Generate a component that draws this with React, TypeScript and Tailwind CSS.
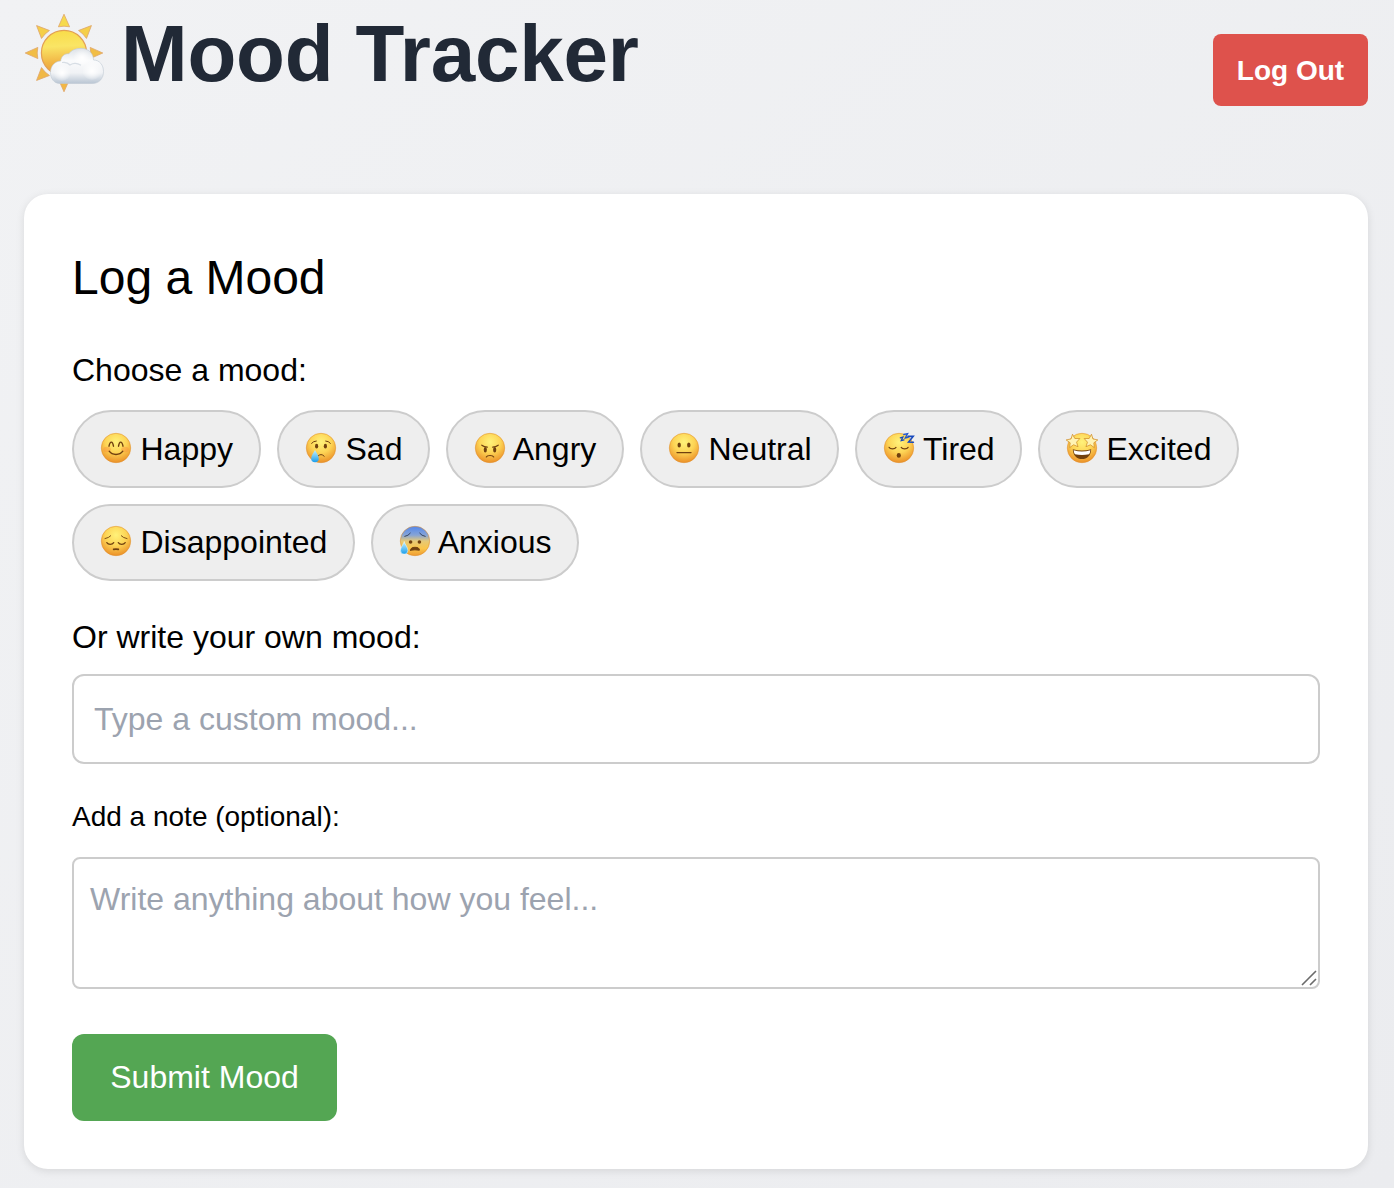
import type { ReactNode } from "react";

type Mood = "Happy" | "Sad" | "Angry" | "Neutral" | "Tired" | "Excited" | "Disappointed" | "Anxious";

const ink = "#70400f";

const star = (cx: number, cy: number, tilt: number) => (
  <path
    transform={`translate(${cx} ${cy}) rotate(${tilt})`}
    d="M0-6.8 1.9-2.3 6.9-1.8 3.2 1.5 4.2 6.2 0 3.8-4.2 6.2-3.2 1.5-6.9-1.8-1.9-2.3Z"
    fill="#fff3b4"
    stroke="#cf8a22"
    strokeWidth=".7"
    strokeLinejoin="round"
  />
);

const features: Record<Mood, ReactNode> = {
  Happy: (
    <g fill="none" stroke={ink} strokeWidth="1.4" strokeLinecap="round">
      <ellipse cx="7" cy="17.5" rx="3.8" ry="2.8" fill="#f98d3c" opacity=".4" stroke="none" />
      <ellipse cx="25" cy="17.5" rx="3.8" ry="2.8" fill="#f98d3c" opacity=".4" stroke="none" />
      <path d="M9 14.2C9.6 10.6 10.8 10.1 11.4 10.1S13 11 13.5 14.2M18.5 14.2C19 11 20 10.1 20.6 10.1S22.4 10.6 23 14.2" />
      <path d="M9.2 19.2C12.2 23.5 19.8 23.5 22.8 19.2" />
    </g>
  ),
  Sad: (
    <g fill="none" stroke={ink} strokeWidth="1" strokeLinecap="round">
      <ellipse cx="11.6" cy="14.2" rx="1.6" ry="2.4" fill={ink} stroke="none" />
      <ellipse cx="20.4" cy="14.2" rx="1.6" ry="2.4" fill={ink} stroke="none" />
      <path d="M6.6 11.3Q8.5 9 11.3 9M20.7 9Q23.5 9 25.4 11.3M12.8 24.2Q16 20.7 19.2 24.2" />
      <path d="M10 18.1C8.8 20.8 6.2 23.5 6.2 26.4A3.8 3.8 0 0 0 13.8 26.4C13.8 23.5 11.2 20.8 10 18.1Z" fill="url(#tear)" stroke="none" />
    </g>
  ),
  Angry: (
    <g fill="none" stroke={ink} strokeWidth="1.2" strokeLinecap="round">
      <ellipse cx="11.3" cy="17.8" rx="1.6" ry="2.7" fill={ink} stroke="none" />
      <ellipse cx="20.7" cy="17.8" rx="1.6" ry="2.7" fill={ink} stroke="none" />
      <path d="M7.8 13.2Q10.2 14.9 13.3 15.2M24.2 13.2Q21.8 14.9 18.7 15.2M12.3 25C13.2 23 18.8 23 19.7 25" />
    </g>
  ),
  Neutral: (
    <g>
      <ellipse cx="11.2" cy="13" rx="1.7" ry="2.6" fill={ink} />
      <ellipse cx="20.8" cy="13" rx="1.7" ry="2.6" fill={ink} />
      <path d="M9 20.6H23" stroke={ink} strokeWidth="1.4" strokeLinecap="round" />
    </g>
  ),
  Tired: (
    <g fill="none" stroke={ink} strokeWidth="1.2" strokeLinecap="round">
      <path d="M6.1 15.4C7.2 17.4 11.8 17.4 13 15.4M18.2 15.4C19.4 17.4 24 17.4 25.1 15.4" />
      <ellipse cx="15.8" cy="23.4" rx="2.1" ry="2.3" fill={ink} stroke="none" />
      <path d="M17.3 5.8 19.9 5.1 18.3 8.6 21 7.9" stroke="#1749bd" strokeWidth="1.3" />
      <path d="M20.8 2.5 24.6 1.7 22.2 6 25.1 5.4" stroke="#2156d0" strokeWidth="1.3" />
      <path d="M25.2 4.4H30.2L25.6 10.1 30.4 10.3" stroke="#1749bd" strokeWidth="1.6" />
    </g>
  ),
  Excited: (
    <g>
      <path d="M6.8 17.2Q16 20 25.2 17.2C25 23.6 21 27 16 27S7 23.6 6.8 17.2Z" fill="#72400d" />
      <path d="M7.6 18.2Q16 20.6 24.4 18.2Q24 21.2 23 22.3Q16 23.8 9 22.3Q8 21.2 7.6 18.2Z" fill="#fff" />
      {star(7.2, 9, -6)}
      {star(24.8, 9, 6)}
    </g>
  ),
  Disappointed: (
    <g fill="none" stroke={ink} strokeWidth="1.2" strokeLinecap="round">
      <path d="M5 13.6Q9 12.8 10.7 10.8M27 13.6Q23 12.8 21.3 10.8" strokeWidth=".9" />
      <path d="M6.8 17.6C8.2 19.9 12.3 19.9 13.7 17.6M18.3 17.6C19.7 19.9 23.8 19.9 25.2 17.6" />
      <path d="M13.6 24.4Q16 23.8 18.4 24.4" strokeWidth="1.6" />
    </g>
  ),
  Anxious: (
    <g fill="none" stroke={ink} strokeWidth="1" strokeLinecap="round">
      <path d="M5.8 11.4Q9.4 10.8 11.3 8.2M26.2 11.4Q22.6 10.8 20.7 8.2" stroke="#35445f" />
      <circle cx="11.6" cy="17" r="1.8" fill={ink} stroke="none" />
      <circle cx="20.4" cy="17" r="1.8" fill={ink} stroke="none" />
      <path d="M11.6 25.2Q11.5 22.3 16 22.3T20.4 25.2Q16 24.4 11.6 25.2Z" fill={ink} />
      <path d="M5.2 16.8C4.3 19.5 1.5 22.5 1.5 25.4A3.7 3.7 0 0 0 8.9 25.4C8.9 22.5 6.1 19.5 5.2 16.8Z" fill="url(#tear)" stroke="#e9faff" strokeWidth=".5" />
    </g>
  ),
};

function Face({ mood }: { mood: Mood }) {
  return (
    <svg className="h-8 w-8 shrink-0 -translate-y-px overflow-visible" viewBox="0 0 32 32" aria-hidden="true">
      <circle cx="16" cy="16" r="14.7" fill={mood === "Anxious" ? "url(#cold)" : "url(#face)"} stroke="#e08f2c" strokeWidth=".7" strokeOpacity=".8" />
      {features[mood]}
    </svg>
  );
}

function Gradients() {
  return (
    <svg className="absolute h-0 w-0" aria-hidden="true">
      <defs>
        <radialGradient id="face" cx=".5" cy=".3" r=".72">
          <stop offset="0" stopColor="#fff27a" />
          <stop offset=".5" stopColor="#fdd455" />
          <stop offset="1" stopColor="#ea8c25" />
        </radialGradient>
        <linearGradient id="cold" x1="0" y1="0" x2="0" y2="1">
          <stop offset="0" stopColor="#5286ed" />
          <stop offset=".3" stopColor="#86a4d6" />
          <stop offset=".5" stopColor="#e5c978" />
          <stop offset=".75" stopColor="#fbc64a" />
          <stop offset="1" stopColor="#ee9b32" />
        </linearGradient>
        <linearGradient id="tear" x1="0" y1="0" x2="0" y2="1">
          <stop offset="0" stopColor="#c3f0ff" />
          <stop offset="1" stopColor="#1b9eeb" />
        </linearGradient>
        <linearGradient id="sun" x1=".4" y1="0" x2=".45" y2="1">
          <stop offset="0" stopColor="#f9dc49" />
          <stop offset=".35" stopColor="#fae565" />
          <stop offset=".7" stopColor="#f1b646" />
          <stop offset="1" stopColor="#e99937" />
        </linearGradient>
        <linearGradient id="cloud" x1="0" y1="0" x2="0" y2="1">
          <stop offset="0" stopColor="#dde2e8" />
          <stop offset=".35" stopColor="#fafbfc" />
          <stop offset=".7" stopColor="#f0f2f5" />
          <stop offset="1" stopColor="#b9c5d3" />
        </linearGradient>
        <radialGradient id="puff" cx=".5" cy=".55" r=".5">
          <stop offset="0" stopColor="#fff" />
          <stop offset="1" stopColor="#fff" stopOpacity="0" />
        </radialGradient>
      </defs>
    </svg>
  );
}

const rays: { angle: number; fill: string }[] = [
  { angle: 0, fill: "#f6da4d" },
  { angle: 45, fill: "#f5cf49" },
  { angle: 90, fill: "#f1bd45" },
  { angle: 135, fill: "#efb544" },
  { angle: 180, fill: "#f2b744" },
  { angle: 225, fill: "#f0b846" },
  { angle: 270, fill: "#f1bd45" },
  { angle: 315, fill: "#f5cf49" },
];

function SunCloud() {
  return (
    <svg className="h-20 w-20 shrink-0" viewBox="24 13 80 80" aria-hidden="true">
      {rays.map(({ angle, fill }) => (
        <path key={angle} transform={`rotate(${angle} 64 53)`} d="M64 14.2 69.6 26.8Q64 25.6 58.4 26.8Z" fill={fill} stroke="#dfa66b" strokeWidth=".8" strokeLinejoin="round" />
      ))}
      <circle cx="64" cy="53" r="22.6" fill="url(#sun)" stroke="#e3a053" strokeWidth="1.2" />
      <path
        d="M60 83.5C54 83.5 50.5 78.5 50.5 72.5C50.5 66 55 61 60.8 61C61 56.5 64.5 53.3 69 53.7C71.5 50 76 48.3 81 48.3C88.5 48.3 93.5 53.5 93.5 60C99.5 60 103.5 65 103.5 71.5C103.5 78.5 99 83.5 92.5 83.5Z"
        fill="url(#cloud)"
        stroke="#c0c9d4"
        strokeWidth=".6"
      />
      <circle cx="82" cy="57" r="9" fill="url(#puff)" />
      <circle cx="62" cy="72" r="9" fill="url(#puff)" />
      <circle cx="92" cy="70" r="10" fill="url(#puff)" />
      <path d="M62 62.5Q67 61.5 70 65Q75 61.8 81 65.2" fill="none" stroke="#ccd4dd" strokeWidth="1.2" opacity=".75" />
    </svg>
  );
}

const moods: { name: Mood; width: string }[] = [
  { name: "Happy", width: "w-[189px]" },
  { name: "Sad", width: "w-[153px]" },
  { name: "Angry", width: "w-[178px]" },
  { name: "Neutral", width: "w-[199px]" },
  { name: "Tired", width: "w-[167px]" },
  { name: "Excited", width: "w-[201px]" },
  { name: "Disappointed", width: "w-[283px]" },
  { name: "Anxious", width: "w-[208px]" },
];

export default function App() {
  return (
    <div className="h-[1188px] w-[1394px] overflow-hidden bg-linear-135 from-[#f1f2f4] to-[#ebecef] px-6 pt-[13px] pr-[26px] font-['Liberation_Sans',Arial,sans-serif] text-[32px] leading-[48px] text-black">
      <Gradients />
      <header className="flex h-[181px] items-start justify-between">
        <h1 className="flex items-start text-[80px] leading-[80px] font-bold tracking-[-0.2px] text-[#212936]">
          <SunCloud />
          <span className="ml-[17px] pt-px">Mood Tracker</span>
        </h1>
        <button className="mt-[21px] h-[72px] w-[155px] rounded-lg bg-[#de524c] pt-px text-[28px] leading-[42px] font-bold text-white">Log Out</button>
      </header>

      <main className="h-[975px] rounded-3xl bg-white px-12 pt-12 shadow-[0_2px_8px_rgba(0,0,0,0.1)]">
        <h2 className="mb-8 text-[48px] leading-[72px]">Log a Mood</h2>
        <p className="mb-4">Choose a mood:</p>
        <div className="flex flex-wrap gap-4">
          {moods.map(({ name, width }) => (
            <button key={name} className={`flex h-[77.6px] items-center rounded-full border-2 border-[#cccccc] bg-[#eeeeee] pl-[25.6px] whitespace-pre ${width}`}>
              <Face mood={name} />
              <span> {name}</span>
            </button>
          ))}
        </div>
        <label className="mt-8 block" htmlFor="custom">Or write your own mood:</label>
        <input id="custom" className="mt-[13px] block h-[90px] w-full rounded-xl border-2 border-[#cccccc] px-5 placeholder:text-[#9ca3af]" placeholder="Type a custom mood..." />
        <label className="mt-8 block text-[28px] leading-[42px]" htmlFor="note">Add a note (optional):</label>
        <div className="relative mt-[19px] h-[132px]">
          <textarea id="note" className="block h-full w-full resize-none rounded-lg border-2 border-[#cccccc] px-4 py-4 placeholder:text-[#9ca3af]" placeholder="Write anything about how you feel..." />
          <svg className="absolute right-[3px] bottom-[3px] h-4 w-4" viewBox="0 0 16 16" stroke="#6b6b6b" strokeWidth="1.6" aria-hidden="true">
            <path d="M1 15 15 1M9 15 15 9" />
          </svg>
        </div>
        <button className="mt-[45px] h-[87px] w-[265px] rounded-xl bg-[#54a653] pb-px text-white">Submit Mood</button>
      </main>
    </div>
  );
}
